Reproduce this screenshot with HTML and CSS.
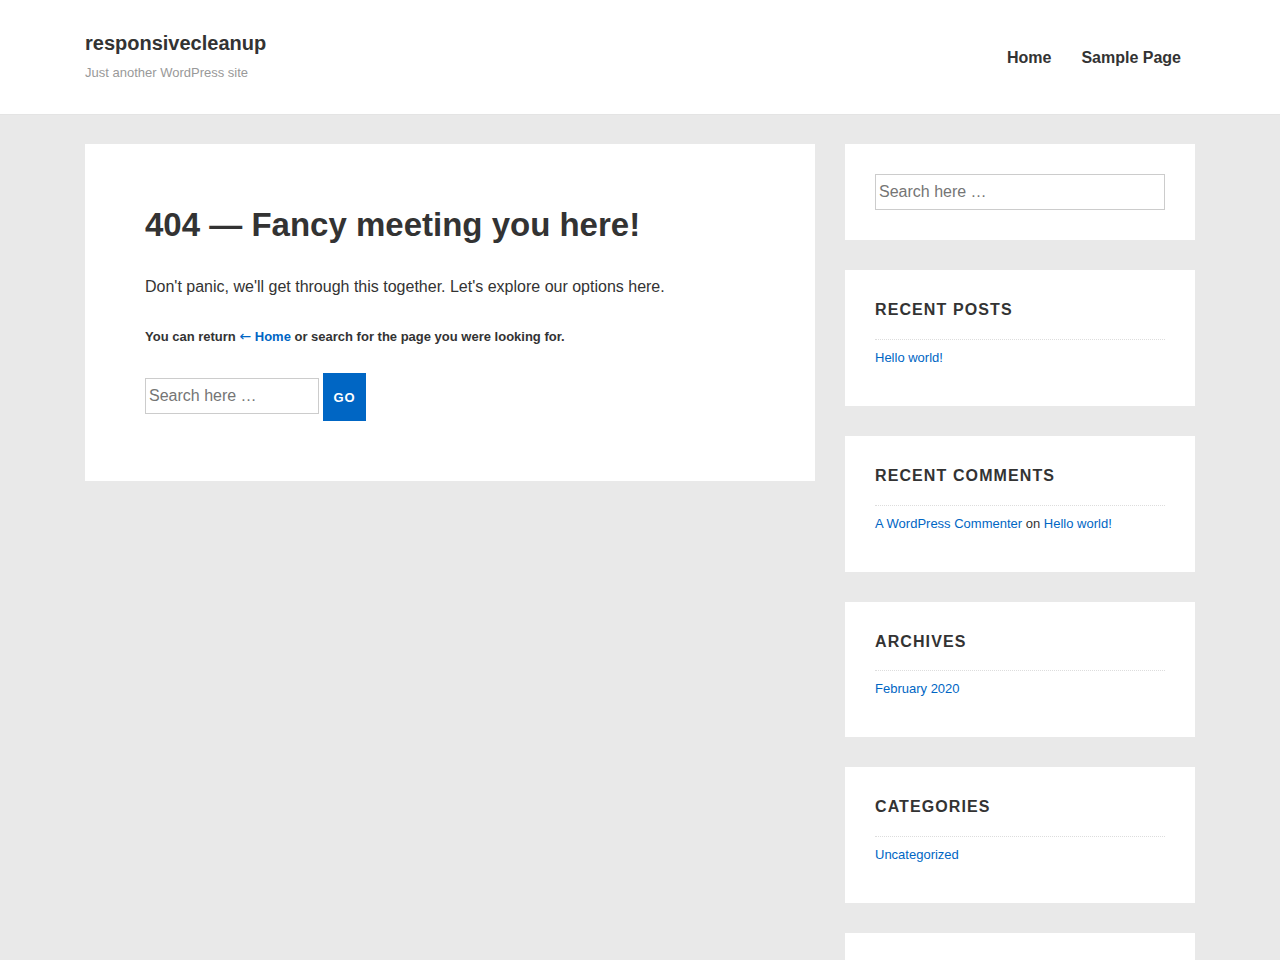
FILE: index.html
```html
<!DOCTYPE html>
<html lang="en">
<head>
<meta charset="utf-8">
<title>Page not found – responsivecleanup</title>
<link rel="stylesheet" href="styles.css">
</head>
<body>
<header class="site-header">
  <div class="container header-inner">
    <div class="branding">
      <div class="site-title">responsivecleanup</div>
      <div class="site-description">Just another WordPress site</div>
    </div>
    <nav class="main-nav">
      <a href="#">Home</a>
      <a href="#">Sample Page</a>
    </nav>
  </div>
</header>

<div class="container content">
  <main class="main">
    <article class="card error-card">
      <h1 class="error-title">404 — Fancy meeting you here!</h1>
      <p class="lead">Don't panic, we'll get through this together. Let's explore our options here.</p>
      <p class="return">You can return <a href="#"><span class="arrow">←</span> Home</a> or search for the page you were looking for.</p>
      <form class="search-form">
        <input class="search-field" type="search" placeholder="Search here …">
        <button class="go" type="button">GO</button>
      </form>
    </article>
  </main>

  <aside class="sidebar">
    <section class="widget">
      <input class="search-field wide" type="search" placeholder="Search here …">
    </section>
    <section class="widget">
      <h2 class="widget-title">Recent Posts</h2>
      <ul class="widget-list">
        <li><a href="#">Hello world!</a></li>
      </ul>
    </section>
    <section class="widget">
      <h2 class="widget-title">Recent Comments</h2>
      <ul class="widget-list">
        <li><a href="#">A WordPress Commenter</a> on <a href="#">Hello world!</a></li>
      </ul>
    </section>
    <section class="widget">
      <h2 class="widget-title">Archives</h2>
      <ul class="widget-list">
        <li><a href="#">February 2020</a></li>
      </ul>
    </section>
    <section class="widget">
      <h2 class="widget-title">Categories</h2>
      <ul class="widget-list">
        <li><a href="#">Uncategorized</a></li>
      </ul>
    </section>
    <section class="widget">
      <h2 class="widget-title">Meta</h2>
      <ul class="widget-list">
        <li><a href="#">Log in</a></li>
        <li><a href="#">Entries feed</a></li>
        <li><a href="#">Comments feed</a></li>
        <li><a href="#">WordPress.org</a></li>
      </ul>
    </section>
  </aside>
</div>

<footer class="site-footer">
  <div class="container footer-inner">© 2020 responsivecleanup</div>
</footer>
</body>
</html>
```

FILE: styles.css
```css
html, body {
  margin: 0;
  padding: 0;
}
body {
  background: #e9e9e9;
  color: #333;
  font-family: "Liberation Sans", Arial, sans-serif;
  font-size: 16px;
}
a {
  color: #0066c4;
  text-decoration: none;
}
.container {
  width: 1110px;
  margin: 0 auto;
  box-sizing: border-box;
}
.container.content,
.container.header-inner,
.container.footer-inner {
  margin-left: 85px;
}

/* header */
.site-header {
  background: #fff;
  height: 114px;
  border-bottom: 1px solid #e4e4e4;
}
.header-inner {
  display: flex;
  justify-content: space-between;
  align-items: flex-start;
}
.branding {
  padding-top: 31px;
}
.site-title {
  font-size: 20px;
  font-weight: bold;
  line-height: 24px;
  color: #333;
}
.site-description {
  margin-top: 9px;
  font-size: 13px;
  line-height: 18px;
  color: #999;
}
.main-nav {
  display: flex;
  padding-top: 47px;
  padding-right: 14px;
}
.main-nav a {
  color: #333;
  font-weight: bold;
  font-size: 16px;
  line-height: 22px;
  padding: 0 15px;
}
.main-nav a:last-child {
  padding-right: 0;
}

/* layout */
.content {
  display: flex;
  align-items: flex-start;
  gap: 30px;
  padding-top: 29px;
}
.main {
  width: 730px;
  flex: none;
}
.sidebar {
  width: 350px;
  flex: none;
  display: flex;
  flex-direction: column;
  gap: 30px;
}
.card {
  background: #fff;
}

/* 404 card */
.error-card {
  padding: 60px;
}
.error-title {
  margin: 0 0 28px;
  font-size: 33px;
  line-height: 42px;
  font-weight: bold;
  color: #333;
}
.lead {
  margin: 0 0 26px;
  font-size: 16px;
  line-height: 25.6px;
}
.return {
  margin: 0 0 26px;
  font-size: 13px;
  line-height: 20.8px;
  font-weight: bold;
}
.arrow {
  font-family: "DejaVu Sans", sans-serif;
  font-weight: normal;
  font-size: 14px;
}
.search-form {
  display: flex;
  align-items: flex-start;
  gap: 4px;
}
.search-form .search-field {
  margin-top: 5px;
}
.search-field {
  box-sizing: border-box;
  width: 174px;
  height: 36px;
  border: 1px solid #ccc;
  border-radius: 0;
  padding: 0 3px;
  font-family: "Liberation Sans", Arial, sans-serif;
  font-size: 16px;
  color: #333;
  background: #fff;
  outline: none;
}
.search-field::placeholder {
  color: #757575;
}
.search-field.wide {
  width: 290px;
  display: block;
}
.go {
  width: 43px;
  height: 48px;
  border: 0;
  border-radius: 0;
  background: #0066c4;
  color: #fff;
  font-family: "Liberation Sans", Arial, sans-serif;
  font-weight: bold;
  font-size: 13px;
  letter-spacing: 1px;
  padding: 0;
}

/* widgets */
.widget {
  background: #fff;
  padding: 30px;
}
.widget-title {
  margin: 0;
  padding-top: 1px;
  padding-bottom: 19px;
  border-bottom: 1px dotted #ddd;
  font-size: 16px;
  line-height: 18.8px;
  font-weight: bold;
  text-transform: uppercase;
  letter-spacing: 1.1px;
  color: #333;
}
.widget-list {
  list-style: none;
  margin: 0;
  padding: 8px 0;
  font-size: 13px;
  line-height: 20px;
}
.widget-list li + li {
  margin-top: 8px;
}

/* footer */
.site-footer {
  margin-top: 30px;
  background: #fff;
  padding: 30px 0;
  font-size: 13px;
  color: #999;
}
```
